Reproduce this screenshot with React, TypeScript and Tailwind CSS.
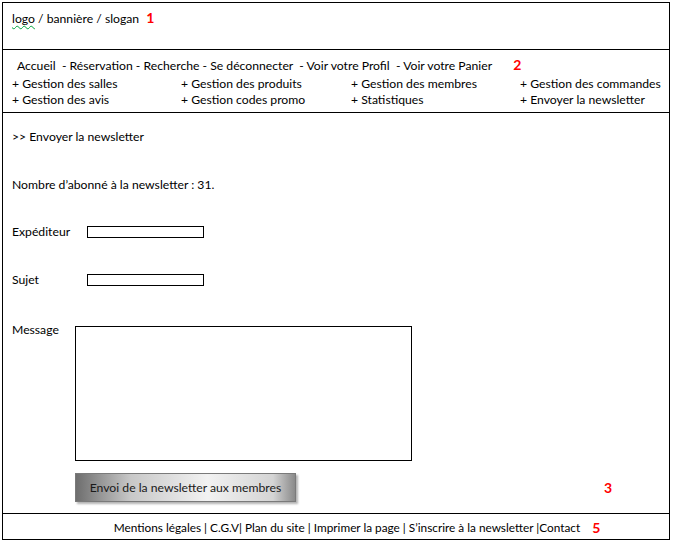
export default function App() {
  const menus = [
    ["+ Gestion des salles", "+ Gestion des produits", "+ Gestion des membres", "+ Gestion des commandes"],
    ["+ Gestion des avis", "+ Gestion codes promo", "+ Statistiques", "+ Envoyer la newsletter"],
  ];

  return (
    <div className="w-[673px] h-[543px] bg-white pt-[2px] pl-[2px] font-['Lato',sans-serif] text-[12.2px] text-black leading-none">
      <div className="w-[668px] h-[538px] border border-black flex flex-col">
        {/* 1 header */}
        <div className="h-[47px] border-b border-black pl-[9px] pt-[8px]">
          <span className="underline decoration-wavy decoration-green-600 decoration-1 underline-offset-2">logo</span>
          <span> / bannière / slogan</span>
          <span className="ml-[7px] text-[#ff0000] font-bold text-[14px]">1</span>
        </div>

        {/* 2 nav */}
        <div className="h-[63px] border-b border-black pl-[9px] pt-[8px]">
          <div className="pl-[5px] h-[20px] whitespace-pre">
            Accueil  - Réservation - Recherche - Se déconnecter  - Voir votre Profil  - Voir votre Panier
            <span className="ml-[21px] text-[#ff0000] font-bold text-[14px]">2</span>
          </div>
          {menus.map((row, i) => (
            <div key={i} className="grid grid-cols-[169px_170px_169px_1fr] h-[16px]">
              {row.map((m) => (
                <span key={m} className="whitespace-nowrap">{m}</span>
              ))}
            </div>
          ))}
        </div>

        {/* main */}
        <div className="flex-1 pl-[9px] pt-[18px]">
          <div>&gt;&gt; Envoyer la newsletter</div>
          <div className="mt-[36px]">Nombre d’abonné à la newsletter : 31.</div>

          <div className="mt-[35px] flex items-center h-[12px]">
            <span className="w-[75px]">Expéditeur</span>
            <div className="w-[117px] h-[12px] border border-black" />
          </div>
          <div className="mt-[36px] flex items-center h-[12px]">
            <span className="w-[75px]">Sujet</span>
            <div className="w-[117px] h-[12px] border border-black" />
          </div>

          <div className="mt-[40px] flex items-start">
            <span className="w-[63px] -mt-[2px]">Message</span>
            <div className="w-[337px] h-[135px] border border-black" />
          </div>

          <div className="mt-[12px] flex items-center">
            <div className="ml-[63px] w-[221px] h-[29px] flex items-center justify-center border border-[#7a7a7a] bg-[linear-gradient(90deg,#6e6e6e_0%,#c8c8c8_25%,#f2f2f2_60%,#d4d4d4_90%,#8a8a8a_100%)] shadow-[2px_2px_2px_rgba(0,0,0,0.3)] text-[#1a1a1a]">
              Envoi de la newsletter aux membres
            </div>
            <span className="ml-[308px] text-[#ff0000] font-bold text-[14px]">3</span>
          </div>
        </div>

        {/* 5 footer */}
        <div className="h-[26px] border-t border-black flex items-center justify-center pl-[42px] pt-[3px]">
          <span className="whitespace-pre text-[11.8px]">Mentions légales | C.G.V| Plan du site | Imprimer la page | S’inscrire à la newsletter |Contact</span>
          <span className="ml-[12px] text-[#ff0000] font-bold text-[14px]">5</span>
        </div>
      </div>
    </div>
  );
}
